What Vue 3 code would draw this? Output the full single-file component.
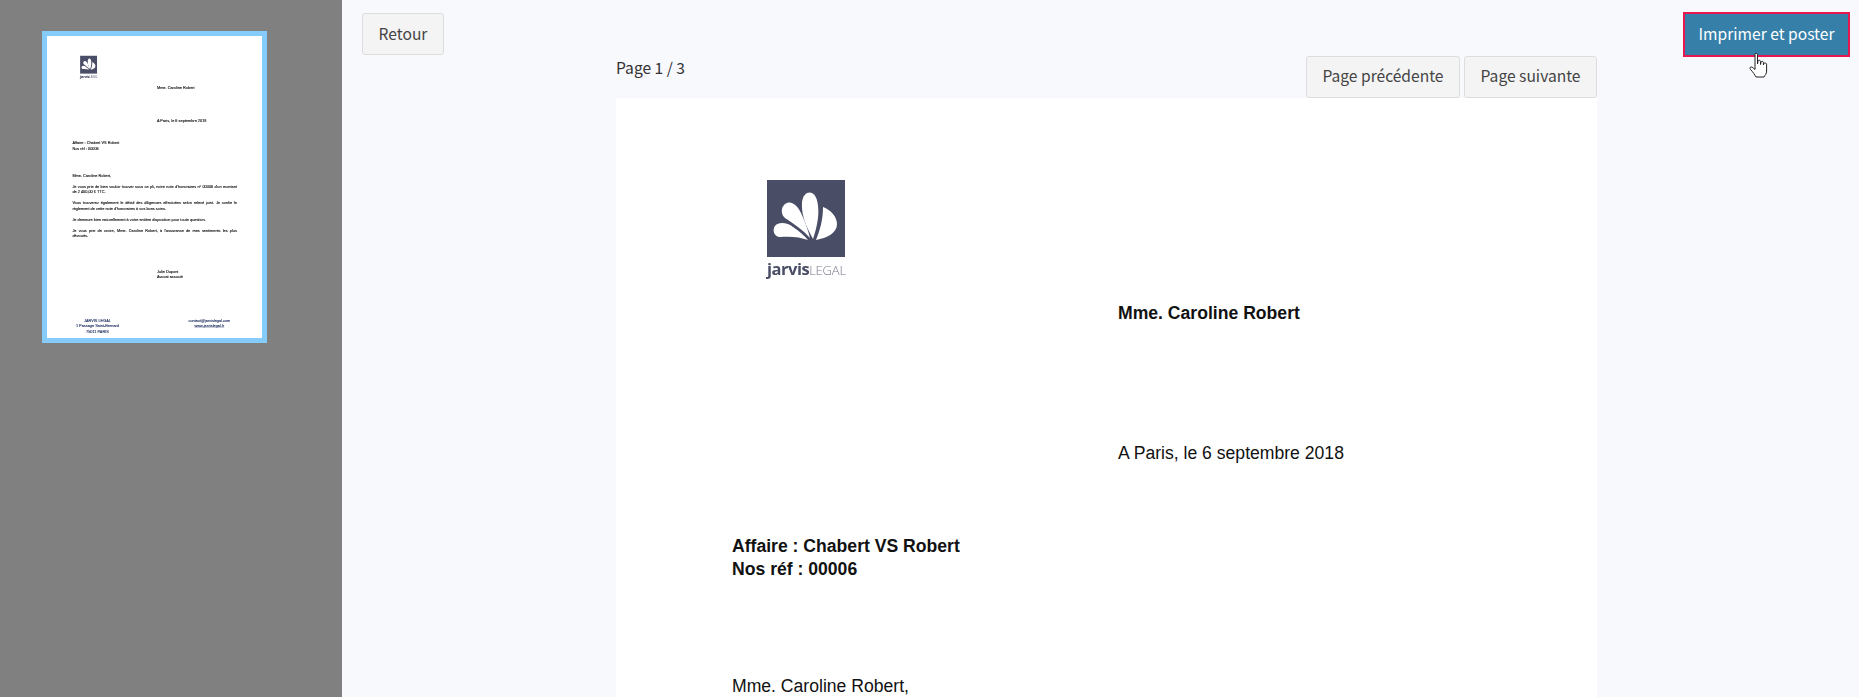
<script setup>
const paragraphs = [
  "Je vous prie de bien vouloir trouver sous ce pli, notre note d'honoraires n° 00006 d'un montant de 2 400,00 € TTC.",
  "Vous trouverez également le détail des diligences effectuées selon relevé joint. Je confie le règlement de cette note d'honoraires à vos bons soins.",
  'Je demeure bien naturellement à votre entière disposition pour toute question.',
  "Je vous prie de croire, Mme. Caroline Robert, à l'assurance de mes sentiments les plus dévoués."
]

const petals = [
  'M46 59C40 48 34 36 35 22C36 14 41 11 45 13C51 16 52 28 51 38C50 46 48 53 46 59Z',
  'M49 60C53 50 56 40 56 27C64 30 70 37 70 44C70 53 60 58 49 60Z',
  'M43 58C36 50 27 44 18 38C13 34 14 25 20 23C26 21 31 27 34 33C38 41 41 50 43 58Z',
  'M41 60C33 57 24 56 13 57C7 57 5 50 8 46C12 41 21 43 26 47C32 51 37 55 41 60Z'
]
</script>

<template>
  <div class="shell">
    <aside class="side">
      <div class="thumb">
        <div class="thumb-clip">
          <div class="sheet sheet-thumb">
            <div class="logo">
              <svg class="logo-mark" viewBox="0 0 78 77">
                <rect width="78" height="77" fill="#4a4d66" />
                <path v-for="d in petals" :key="d" :d="d" fill="#fff" />
              </svg>
              <div class="logo-name"><b>jarvis</b><span>LEGAL</span></div>
            </div>
            <p class="to">Mme. Caroline Robert</p>
            <p class="date">A Paris, le 6 septembre 2018</p>
            <p class="subject">Affaire : Chabert VS Robert<br />Nos réf : 00006</p>
            <p class="hello">Mme. Caroline Robert,</p>
            <p v-for="text in paragraphs" :key="text" class="para">{{ text }}</p>
            <p class="sign">Julie Dupont<br />Avocat associé</p>
            <div class="foot">
              <p>JARVIS LEGAL<br />1 Passage Saint-Bernard<br />75011 PARIS</p>
              <p>contact@jarvislegal.com<br /><u>www.jarvislegal.fr</u></p>
            </div>
          </div>
        </div>
      </div>
    </aside>

    <main class="content">
      <div class="toolbar">
        <button class="btn btn-back">Retour</button>
        <button class="btn btn-print">Imprimer et poster</button>
      </div>

      <section class="viewer">
        <div class="pager">
          <span class="page-count">Page 1 / 3</span>
          <div class="pager-btns">
            <button class="btn">Page précédente</button>
            <button class="btn">Page suivante</button>
          </div>
        </div>
        <div class="sheet">
          <div class="logo">
            <svg class="logo-mark" viewBox="0 0 78 77">
              <rect width="78" height="77" fill="#4a4d66" />
              <path v-for="d in petals" :key="d" :d="d" fill="#fff" />
            </svg>
            <div class="logo-name"><b>jarvis</b><span>LEGAL</span></div>
          </div>
          <p class="to bold">Mme. Caroline Robert</p>
          <p class="date">A Paris, le 6 septembre 2018</p>
          <p class="subject bold">Affaire : Chabert VS Robert<br />Nos réf : 00006</p>
          <p class="hello">Mme. Caroline Robert,</p>
        </div>
      </section>
    </main>

    <svg class="cursor" viewBox="0 0 24 30" width="24" height="30">
      <path d="M8 2.5C8 1 10.5 1 10.5 2.5V12L11 9C11.5 7.8 13.4 8 13.5 9.5V12.5L14 10C14.5 9 16.3 9.2 16.4 10.6V13L16.8 11.5C17.4 10.6 19.6 11 19.6 12.2V19C19.6 22 18 23 17 25H9C8 23 6 20 3.5 17.5C2.2 16 3.6 14.2 5.2 15.2L8 17.5Z" fill="#fff" stroke="#222" stroke-width="1" stroke-linejoin="round" />
    </svg>
  </div>
</template>

<style scoped>
.shell {
  position: relative;
  display: flex;
  height: 697px;
  overflow: hidden;
  background: #f8f9fd;
  font-family: "Noto Sans CJK SC", "Noto Sans", sans-serif;
}

.side {
  flex: 0 0 342px;
  padding: 31px 0 0 42px;
  box-sizing: border-box;
  background: #808080;
}

.thumb {
  width: 225px;
  height: 312px;
  box-sizing: border-box;
  border: 5px solid #85ccfb;
  background: #fff;
}

.thumb-clip {
  width: 215px;
  height: 302px;
  overflow: hidden;
  filter: blur(0.5px);
}

.sheet-thumb {
  width: 981px;
  height: 1270px;
  color: #000;
  -webkit-text-stroke: 0.5px currentColor;
  transform: scale(0.219, 0.238);
  transform-origin: 0 0;
}

.content {
  flex: 1;
  min-width: 0;
  padding: 12px 9px 0 20px;
}

.toolbar {
  display: flex;
  justify-content: space-between;
  align-items: flex-start;
  height: 44px;
}

.btn {
  height: 42px;
  padding: 0 15.5px 2px;
  border: 1px solid #ddd;
  border-radius: 3px;
  background: #f4f4f4;
  color: #444;
  white-space: nowrap;
  font: 15.6px/1 "Noto Sans CJK SC", "Noto Sans", sans-serif;
}

.btn-back {
  width: 82px;
  margin-top: 1px;
  padding: 0;
}

.btn-print {
  width: 167px;
  height: 45px;
  padding: 0 0 2px;
  border: 2px solid #e8174f;
  border-radius: 0;
  background: #367fa9;
  color: #fff;
}

.viewer {
  width: 981px;
  margin-left: 254px;
}

.pager {
  display: flex;
  justify-content: space-between;
  height: 42px;
}

.page-count {
  margin-top: -1px;
  font-size: 15.6px;
  line-height: 24px;
  color: #333;
}

.pager-btns {
  display: flex;
  gap: 4px;
}

.sheet {
  width: 981px;
  min-height: 1270px;
  padding: 82px 114px 0 116px;
  box-sizing: border-box;
  background: #fff;
  color: #111;
  font: 17.6px/23px "Liberation Sans", Arial, sans-serif;
}

.sheet p {
  margin: 0;
}

.bold {
  font-weight: 700;
}

.logo {
  width: 78px;
  margin-left: 35px;
}

.logo-mark {
  display: block;
  width: 78px;
  height: 77px;
  filter: blur(0.4px);
}

.logo-name {
  display: flex;
  align-items: baseline;
  margin-top: 1px;
  height: 22px;
  color: #4a4d66;
  font: 700 16.5px/22px "Open Sans", sans-serif;
  letter-spacing: -0.5px;
  white-space: nowrap;
  filter: blur(0.3px);
}

.logo-name b {
  font-weight: 700;
}

.logo-name span {
  font-size: 13px;
  font-weight: 300;
  letter-spacing: -0.2px;
  color: #777a8c;
}

.sheet .to {
  margin-top: 22px;
  margin-left: 386px;
}

.sheet .date {
  margin-top: 117px;
  margin-left: 386px;
}

.sheet .subject {
  margin-top: 70px;
}

.sheet .hello {
  margin-top: 95px;
  line-height: 20px;
}

.sheet .para {
  margin-top: 23px;
  text-align: justify;
}

.sheet .sign {
  margin-top: 127px;
  margin-left: 386px;
}

.foot {
  display: flex;
  justify-content: space-between;
  margin-top: 160px;
  padding: 0 30px 0 16px;
  color: #1a2a5e;
  text-align: center;
}

.cursor {
  position: absolute;
  left: 1747px;
  top: 52px;
}
</style>
